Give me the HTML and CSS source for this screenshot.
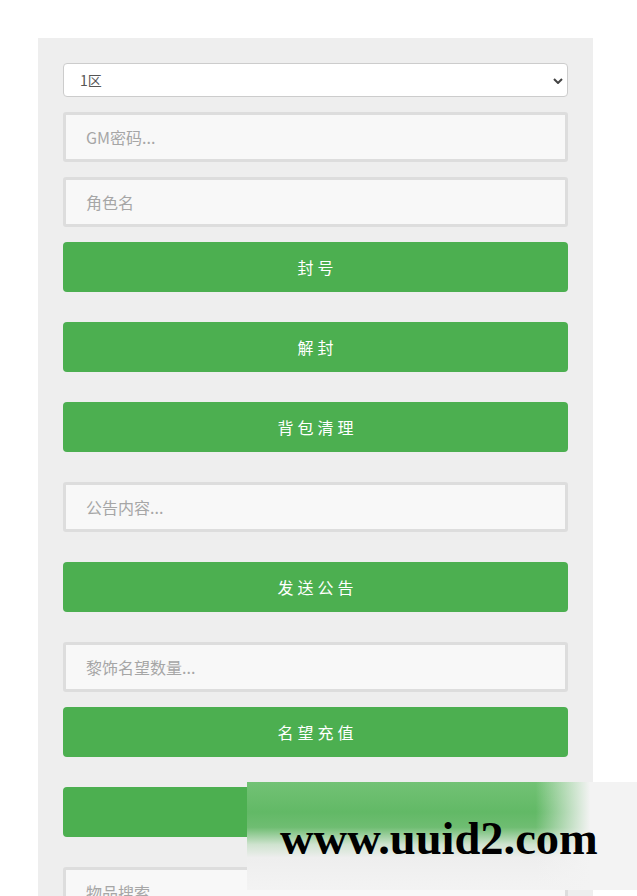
FILE: index.html
```html
<!DOCTYPE html>
<html lang="zh-CN">
<head>
<meta charset="utf-8">
<title>GM工具</title>
<link rel="stylesheet" href="styles.css">
</head>
<body>
<div class="panel">
  <div class="group">
    <div class="select-wrap">
      <select class="zone"><option>1区</option><option>2区</option></select>
      <svg class="chev" width="10" height="6" viewBox="0 0 10 6"><path d="M1 1 L5 5 L9 1" fill="none" stroke="#444" stroke-width="2"/></svg>
    </div>
    <input class="field" type="text" placeholder="GM密码...">
    <input class="field" type="text" placeholder="角色名">
    <button class="btn">封号</button>
  </div>
  <button class="btn">解封</button>
  <button class="btn">背包清理</button>
  <input class="field" type="text" placeholder="公告内容...">
  <button class="btn">发送公告</button>
  <div class="group">
    <input class="field" type="text" placeholder="黎饰名望数量...">
    <button class="btn">名望充值</button>
  </div>
  <button class="btn" aria-label="清理邮件"></button>
  <div class="group">
    <input class="field" type="text" placeholder="物品搜索">
    <input class="field" type="text" placeholder="物品数量...">
    <button class="btn">发送物品</button>
  </div>
</div>
<div class="watermark"><span class="wm-text">www.uuid2.com</span></div>
</body>
</html>
```
FILE: styles.css
```css
html, body {
  margin: 0;
  padding: 0;
  background: #ffffff;
  font-family: "Noto Sans CJK SC", "Noto Sans", sans-serif;
}

.panel {
  margin: 38px 0 0 38px;
  width: 555px;
  box-sizing: border-box;
  padding: 25px;
  background: #eeeeee;
  display: flex;
  flex-direction: column;
  gap: 30px;
}

.group {
  display: flex;
  flex-direction: column;
  gap: 15px;
}

.select-wrap {
  position: relative;
  height: 34px;
}

.zone {
  appearance: none;
  -webkit-appearance: none;
  display: block;
  width: 100%;
  height: 34px;
  box-sizing: border-box;
  margin: 0;
  padding: 0 16px;
  border: 1px solid #cccccc;
  border-radius: 4px;
  background: #ffffff;
  color: #555555;
  font-family: "Noto Sans CJK SC", "Noto Sans", sans-serif;
  font-size: 14px;
  outline: none;
}

.chev {
  position: absolute;
  right: 5px;
  top: 15px;
  pointer-events: none;
}

.field {
  display: block;
  width: 100%;
  height: 50px;
  box-sizing: border-box;
  margin: 0;
  padding: 0 20px;
  border: 3px solid #dddddd;
  border-radius: 3px;
  background: #f8f8f8;
  color: #333333;
  font-family: "Noto Sans CJK SC", "Noto Sans", sans-serif;
  font-size: 16px;
  outline: none;
}

.field::placeholder {
  color: #a6a6a6;
}

.btn {
  display: block;
  width: 100%;
  height: 50px;
  margin: 0;
  padding: 0 0 0 4px;
  border: none;
  border-radius: 4px;
  background: #4caf50;
  color: #ffffff;
  font-family: "Noto Sans CJK SC", "Noto Sans", sans-serif;
  font-size: 16px;
  letter-spacing: 4px;
  cursor: pointer;
}

.watermark {
  position: absolute;
  left: 247px;
  top: 782px;
  width: 390px;
  height: 108px;
  background:
    linear-gradient(to right, rgba(243,243,243,0) 74%, rgba(243,243,243,1) 88%),
    linear-gradient(to bottom, #72c275 0%, #62b966 28%, #6fbd72 42%, #cfe3cf 58%, #eeeeee 70%, #f3f3f3 100%);
}

.wm-text {
  position: absolute;
  left: 33px;
  top: 27px;
  font-family: "Liberation Serif", "Times New Roman", serif;
  font-weight: bold;
  font-size: 46.5px;
  line-height: 60px;
  color: #000000;
  white-space: nowrap;
}
```
